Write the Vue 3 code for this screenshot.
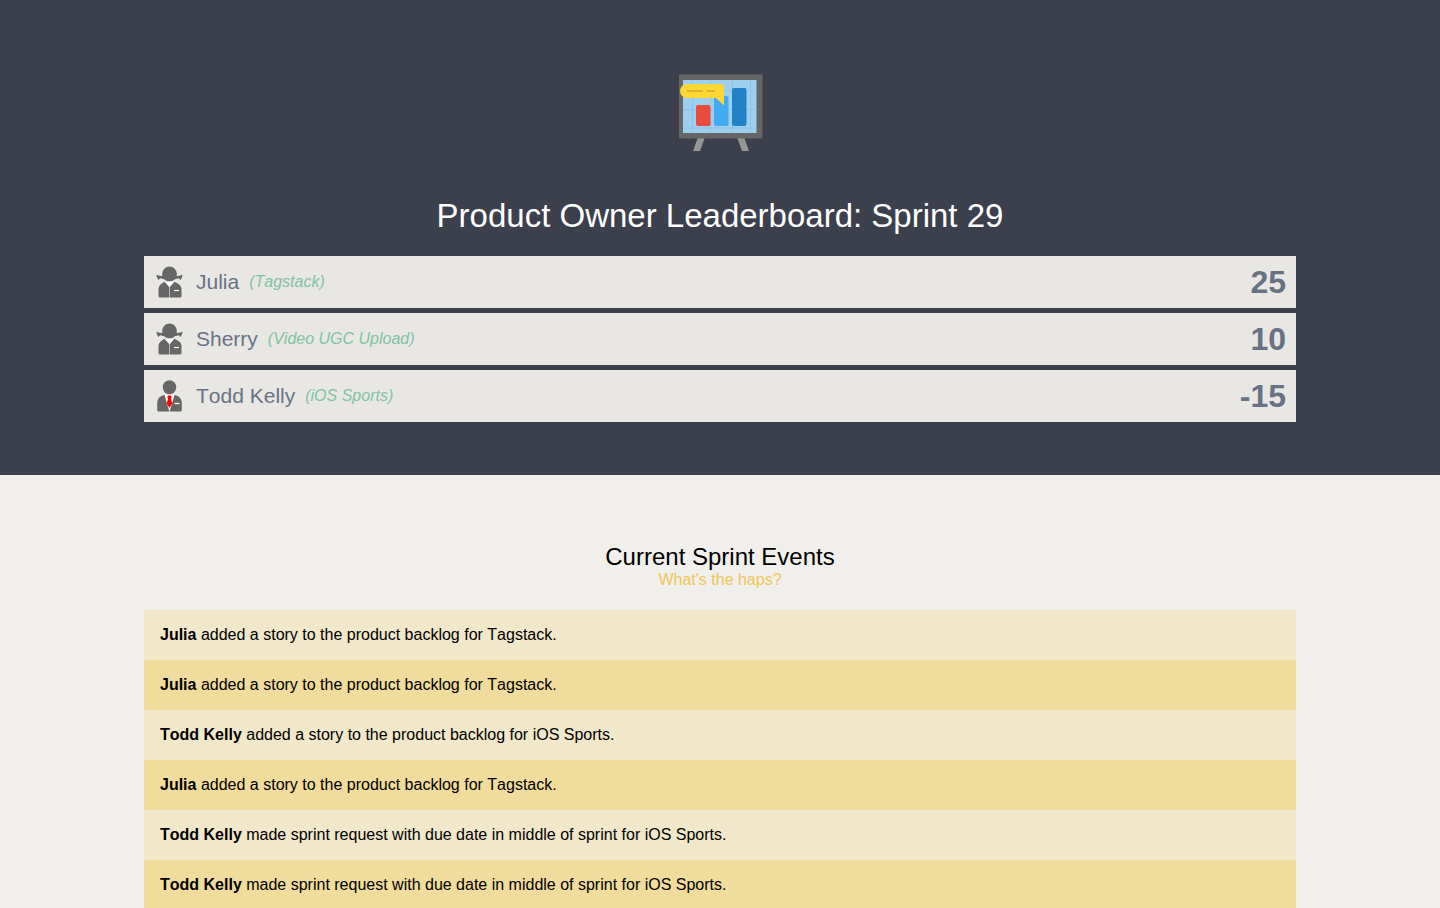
<script setup>
const owners = [
  { name: 'Julia', product: 'Tagstack', score: 25, icon: 'woman' },
  { name: 'Sherry', product: 'Video UGC Upload', score: 10, icon: 'woman' },
  { name: 'Todd Kelly', product: 'iOS Sports', score: -15, icon: 'man' },
]

const story = 'added a story to the product backlog for'
const request = 'made sprint request with due date in middle of sprint for'
const events = [
  { who: 'Julia', action: story, product: 'Tagstack' },
  { who: 'Julia', action: story, product: 'Tagstack' },
  { who: 'Todd Kelly', action: story, product: 'iOS Sports' },
  { who: 'Julia', action: story, product: 'Tagstack' },
  { who: 'Todd Kelly', action: request, product: 'iOS Sports' },
  { who: 'Todd Kelly', action: request, product: 'iOS Sports' },
]
</script>

<template>
  <header class="board">
    <svg class="logo" viewBox="0 0 100 95" aria-hidden="true">
      <path d="M28 72h7l-5 14h-7z M67 72h7l5 14h-7z" fill="#969696" />
      <rect x="9" y="9.500" width="83.500" height="64" rx="1" fill="#666" />
      <rect x="13" y="15" width="73.500" height="53" fill="#9dcfef" />
      <path d="M22.500 15v53M40.500 15v53M62.500 15v53M80.500 15v53M13 26h73.500M13 44.500h73.500M13 63h73.500" stroke="#8fc3e5" stroke-width="1" fill="none" />
      <rect x="26" y="40" width="14.500" height="21" rx="2" fill="#e74c3c" />
      <rect x="44" y="31" width="14.500" height="30" rx="2" fill="#42aaf0" />
      <rect x="62" y="23" width="14.500" height="38" rx="2" fill="#2083c5" />
      <path d="M17 19h34q3 0 3 3v18.500l-8-7.500H17a7 7 0 0 1 0-14z" fill="#ffd735" />
      <path d="M17 26h16M36.500 26H45" stroke="#c9ab32" stroke-width="1.500" fill="none" />
    </svg>
    <h1>Product Owner Leaderboard: Sprint 29</h1>
    <ol class="owners">
      <li v-for="owner in owners" :key="owner.name" class="owner">
        <svg class="avatar" viewBox="0 0 32 32" aria-hidden="true">
          <template v-if="owner.icon === 'woman'">
            <path d="M2.400 8.800q3 1.500 6.600 1h13q3.600.500 6.600-1 0 2.800-2 5.200l-2-1.700-2.600.700H9l-2.600-.700-2 1.700Q2.400 11.600 2.400 8.800z" fill="#666" />
            <path d="M10 15.800h11l-5.500 7z" fill="#fff" />
            <path d="M9.800 13h11.400l-2 3h-7.400z" fill="#e9e7e3" />
            <circle cx="15.500" cy="7.900" r="7.400" fill="#666" />
            <path d="M10.500 15.800l4.700 5.200v10.500H6q-1.500 0-1.500-1.500v-7.500Q5 18.500 10.500 15.800zM20.500 15.800l-4.700 5.200v10.500H26q1.500 0 1.500-1.500v-7.500Q27 18.500 20.500 15.800z" fill="#666" />
            <path d="M20 24.500h5" stroke="#fff" stroke-width="1.200" />
          </template>
          <template v-else>
            <path d="M10.500 15h10.500l-5.300 16z" fill="#fff" />
            <ellipse cx="15.500" cy="7.300" rx="6.700" ry="7" fill="#666" />
            <path d="M10.500 15l4.800 16.500H4.700q-1.500 0-1.500-1.500v-7q0-6.500 7.300-8zM20.500 15l-4.800 16.500h10.600q1.500 0 1.500-1.500v-7q0-6.500-7.300-8z" fill="#666" />
            <path d="M14 15.500h3l.700 2-.700 1 1.200 5-2.700 4.500-2.700-4.500 1.200-5-.700-1z" fill="#f00" />
            <path d="M20.500 23.500h5" stroke="#fff" stroke-width="1.200" />
          </template>
        </svg>
        <span class="name">{{ owner.name }}</span>
        <em class="product">({{ owner.product }})</em>
        <strong class="score">{{ owner.score }}</strong>
      </li>
    </ol>
  </header>
  <main class="events">
    <h2>Current Sprint Events</h2>
    <p class="tagline">What's the haps?</p>
    <ul class="feed">
      <li v-for="(event, index) in events" :key="index">
        <strong>{{ event.who }}</strong> {{ event.action }} {{ event.product }}.
      </li>
    </ul>
  </main>
</template>

<style>
body {
  margin: 0;
  background: #f1efeb;
  font-family: "Helvetica Neue", "Liberation Sans", Arial, sans-serif;
  font-size: 16px;
  line-height: 20px;
  font-kerning: none;
  color: #000;
}
</style>

<style scoped>
h1,
h2,
p,
ol,
ul {
  margin: 0;
  padding: 0;
  font-weight: 400;
}
ol,
ul {
  list-style: none;
}
strong {
  font-weight: 700;
}
.board {
  padding: 65px 10% 53px;
  background: #3b404c;
  text-align: center;
}
.logo {
  display: block;
  width: 100px;
  height: 95px;
  margin: 0 auto 36px;
}
h1 {
  margin-bottom: 20px;
  color: #fff;
  font-size: 33px;
  line-height: 40px;
}
.owners {
  display: grid;
  gap: 5px;
}
.owner {
  display: flex;
  align-items: center;
  height: 52px;
  padding: 0 10px;
  background: #e9e7e3;
}
.avatar {
  width: 32px;
  height: 32px;
  margin-right: 10px;
}
.name {
  color: #687285;
  font-size: 21px;
}
.product {
  margin-left: 10px;
  color: #7fc3a5;
}
.score {
  margin-left: auto;
  color: #687285;
  font-size: 32px;
}
.events {
  padding: 68px 10% 0;
  text-align: center;
}
h2 {
  font-size: 24px;
  line-height: 27px;
}
.tagline {
  margin-bottom: 20px;
  color: #efc557;
}
.feed {
  text-align: left;
}
.feed li {
  padding: 15px 16px;
  background: #f1e7ca;
}
.feed li:nth-child(even) {
  background: #f0dc9c;
}
</style>
